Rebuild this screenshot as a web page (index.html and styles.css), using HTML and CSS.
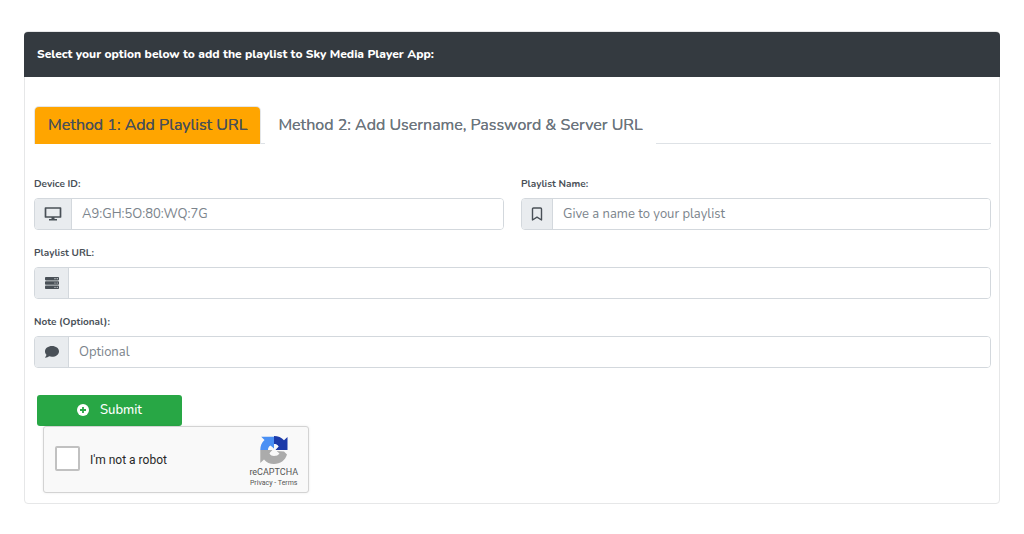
FILE: index.html
```html
<!DOCTYPE html>
<html lang="en">
<head>
<meta charset="utf-8">
<meta name="viewport" content="width=device-width, initial-scale=1">
<title>Sky Media Player - Add Playlist</title>
<link rel="stylesheet" href="styles.css">
</head>
<body>
<main class="card">
  <header class="card-header"><h1 class="card-title">Select your option below to add the playlist to Sky Media Player App:</h1></header>
  <div class="card-body">
    <nav class="tabs">
      <a class="tab tab-active" href="#url">Method 1: Add Playlist URL</a>
      <span class="tab-gap"></span>
      <a class="tab" href="#login">Method 2: Add Username, Password &amp; Server URL</a>
      <span class="tab-rest"></span>
    </nav>
    <form class="form">
      <div class="row">
        <div class="field">
          <label class="label" for="device">Device ID:</label>
          <div class="group">
            <span class="addon addon-wide">
              <svg width="18" height="14" viewBox="0 0 18 14"><path d="M1.500 1h15v9h-15z" fill="none" stroke="#495057" stroke-width="1.700" stroke-linejoin="round"/><path d="M7.500 10h3v2h2.500v1.500h-8V12h2.500z" fill="#495057"/></svg>
            </span>
            <input class="input device" id="device" type="text" placeholder="A9:GH:5O:80:WQ:7G">
          </div>
        </div>
        <div class="field">
          <label class="label" for="name">Playlist Name:</label>
          <div class="group">
            <span class="addon addon-name">
              <svg width="12" height="14" viewBox="0 0 12 14"><path d="M1.500 2Q1.500 1 2.500 1h7Q10.500 1 10.500 2v11L6 10.200l-4.500 2.800z" fill="none" stroke="#495057" stroke-width="1.400" stroke-linejoin="round"/></svg>
            </span>
            <input class="input" id="name" type="text" placeholder="Give a name to your playlist">
          </div>
        </div>
      </div>
      <div class="field">
        <label class="label" for="url">Playlist URL:</label>
        <div class="group">
          <span class="addon">
            <svg width="14" height="12" viewBox="0 0 14 12"><g fill="#495057"><rect width="14" height="3.400" rx=".8"/><rect y="4.300" width="14" height="3.400" rx=".8"/><rect y="8.600" width="14" height="3.400" rx=".8"/></g><g fill="#e9ecef"><circle cx="10" cy="1.700" r=".6"/><circle cx="12.200" cy="1.700" r=".6"/><circle cx="10" cy="6" r=".6"/><circle cx="12.200" cy="6" r=".6"/><circle cx="10" cy="10.300" r=".6"/><circle cx="12.200" cy="10.300" r=".6"/></g></svg>
          </span>
          <input class="input" id="url" type="text">
        </div>
      </div>
      <div class="field">
        <label class="label" for="note">Note (Optional):</label>
        <div class="group">
          <span class="addon">
            <svg width="14" height="12" viewBox="0 0 14 12"><path d="M7 0c3.900 0 7 2.400 7 5.400s-3.100 5.400-7 5.400c-1 0-2-.2-2.900-.5C3.200 11 1.900 11.700.3 11.700c-.3 0-.3-.3-.1-.5.600-.7 1.100-1.500 1.300-2.400C.6 7.900 0 6.700 0 5.400 0 2.400 3.100 0 7 0z" fill="#495057"/></svg>
          </span>
          <input class="input" id="note" type="text" placeholder="Optional">
        </div>
      </div>
      <button class="submit" type="button">
        <svg width="12" height="12" viewBox="0 0 12 12"><circle cx="6" cy="6" r="6" fill="#fff"/><path d="M6 3v6M3 6h6" stroke="#28a745" stroke-width="1.800"/></svg>
        Submit
      </button>
      <div class="captcha">
        <input class="check" id="robot" type="checkbox">
        <label class="robot" for="robot">I'm not a robot</label>
        <div class="brand">
          <svg width="28" height="28" viewBox="0 0 28 28"><path d="M27.500 1v13H15l3.600-3.600C17.500 8.600 16 8 14 8V0c4 0 7.700 1.500 10 4.300z" fill="#1c3aa9"/><path d="M1.200.8H14V13l-3.500-3.500C8.700 10.500 8 12 8 14H.3c0-4 1.500-7.500 4.200-9.900z" fill="#4a90f4"/><path d="M.3 27V14H13l-3.400 3.500C10.600 19.300 12 20 14 20c2.300 0 4-.7 5-2.500L16.500 15l7.500.5 3 3C25.300 24.200 20.300 28 14 28c-4 0-7.500-1.500-10-4.600z" fill="#ababab"/><path d="M8.500 13.500l3-3 2.500 2.300V8.500l4.500 1.800L15.300 14l4.200 3.500-2.600 2L14 17l-2.500 2-2-1.700 3-3.300z" fill="#f9f9f9"/></svg>
          <span class="brand-name">reCAPTCHA</span>
          <span class="legal"><a class="legal-link" href="#privacy">Privacy</a> - <a class="legal-link" href="#terms">Terms</a></span>
        </div>
      </div>
    </form>
  </div>
</main>
</body>
</html>
```
FILE: styles.css
```css
* { box-sizing: border-box; }
body {
  margin: 0;
  padding: 31px 24px;
  background: #fff;
  color: #495057;
  font-family: Nunito, Lato, "Open Sans", sans-serif;
}
.card { border: 1px solid #e6e7e8; border-radius: 4px; }
.card-header {
  margin: 0 -1px;
  padding: 12px 13px;
  border-radius: 4px 4px 0 0;
  background: #343a40;
}
.card-title { margin: 0; color: #fff; font-size: 12px; font-weight: 800; line-height: 21px; }
.card-body { padding: 30px 8px 10px 9px; }
.tabs { display: flex; padding-left: 1px; }
.tab {
  padding: 7px 13px;
  border-radius: 4px 4px 0 0;
  color: #6c757d;
  font-size: 16px;
  font-weight: 400;
  line-height: 23px;
  text-decoration: none;
  text-shadow: 0 0 0 currentColor;
  white-space: nowrap;
}
.tab-active { background: #ffa500; color: #495057; box-shadow: 0 0 0 1px #e4e6e8; clip-path: inset(-1px -1px 0 -1px); }
.tab-gap { width: 5px; border-bottom: 1px solid #dee2e6; }
.tab-rest { flex: 1; border-bottom: 1px solid #dee2e6; }
.form { display: flex; flex-direction: column; gap: 14px; padding-top: 31px; }
.row { display: grid; grid-template-columns: 1fr 1fr; gap: 17px; }
.label { display: block; margin-bottom: 5px; font-size: 10px; font-weight: 700; line-height: 18px; }
.group { display: flex; height: 32px; border: 1px solid #d3d8dd; border-radius: 4px; overflow: hidden; }
.addon {
  display: flex;
  flex: none;
  align-items: center;
  justify-content: center;
  width: 34px;
  border-right: 1px solid #d3d8dd;
  background: #e9ecef;
}
.addon-wide { width: 37px; }
.addon-name { width: 31px; }
.input {
  flex: 1;
  min-width: 0;
  padding: 0 10px;
  border: 0;
  outline: 0;
  background: #fff;
  color: #495057;
  font: 400 13px/20px Nunito, Lato, "Open Sans", sans-serif;
}
.device { font-variant-numeric: slashed-zero; }
.input::placeholder { color: #7b848c; opacity: 1; }
.submit {
  display: flex;
  align-items: center;
  justify-content: center;
  gap: 11px;
  width: 145px;
  height: 31px;
  margin: 13px 0 0 3px;
  padding: 0 6px 2px;
  border: 0;
  border-radius: 3px;
  background: #28a745;
  color: #fff;
  font: 500 13px/20px Nunito, Lato, "Open Sans", sans-serif;
}
.captcha {
  display: flex;
  align-items: center;
  width: 266px;
  height: 67px;
  margin: -14px 0 0 9px;
  padding: 0 10px 0 11px;
  border: 1px solid #d3d3d3;
  border-radius: 3px;
  background: #f9f9f9;
  box-shadow: 0 0 3px rgba(0, 0, 0, .08);
  font-family: Roboto, sans-serif;
}
.check {
  appearance: none;
  width: 25px;
  height: 25px;
  margin: 0 10px 2px 0;
  border: 2px solid #c1c1c1;
  border-radius: 2px;
  background: #fff;
}
.robot { flex: 1; color: #282828; font-size: 12px; line-height: 16px; }
.brand { display: flex; flex-direction: column; align-items: center; padding-top: 4px; color: #555; }
.brand-name { margin-top: 2px; font-size: 9px; line-height: 12px; }
.legal { font-size: 7px; line-height: 10px; }
.legal-link { color: #555; text-decoration: none; }
```
